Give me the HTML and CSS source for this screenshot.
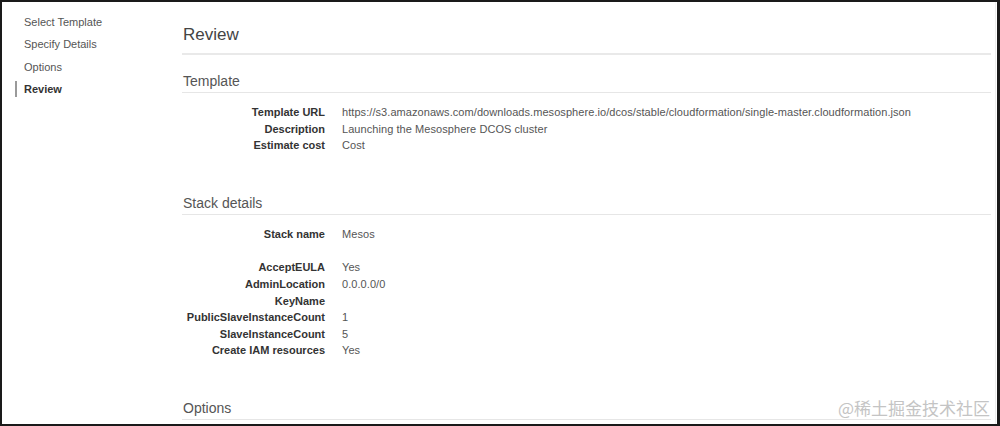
FILE: index.html
```html
<!DOCTYPE html>
<html>
<head>
<meta charset="utf-8">
<link rel="stylesheet" href="styles.css">
</head>
<body>
<div class="frame">
  <div class="page">
    <nav class="side">
      <div class="nav-item">Select Template</div>
      <div class="nav-item">Specify Details</div>
      <div class="nav-item">Options</div>
      <div class="nav-item active">Review</div>
    </nav>
    <main class="main">
      <h1 class="title">Review</h1>

      <section class="section">
        <h2 class="heading">Template</h2>
        <div class="rows">
          <div class="label">Template URL</div><div class="value">https://s3.amazonaws.com/downloads.mesosphere.io/dcos/stable/cloudformation/single-master.cloudformation.json</div>
          <div class="label">Description</div><div class="value">Launching the Mesosphere DCOS cluster</div>
          <div class="label">Estimate cost</div><div class="value">Cost</div>
        </div>
      </section>

      <section class="section">
        <h2 class="heading">Stack details</h2>
        <div class="rows">
          <div class="label">Stack name</div><div class="value">Mesos</div>
          <div class="spacer"></div>
          <div class="label">AcceptEULA</div><div class="value">Yes</div>
          <div class="label">AdminLocation</div><div class="value">0.0.0.0/0</div>
          <div class="label">KeyName</div><div class="value"></div>
          <div class="label">PublicSlaveInstanceCount</div><div class="value">1</div>
          <div class="label">SlaveInstanceCount</div><div class="value">5</div>
          <div class="label">Create IAM resources</div><div class="value">Yes</div>
        </div>
      </section>

      <section class="section">
        <h2 class="heading">Options</h2>
      </section>
    </main>
  </div>
  <div class="watermark">@稀土掘金技术社区</div>
</div>
</body>
</html>
```

FILE: styles.css
```css
html, body {
  margin: 0;
  padding: 0;
  background: #ffffff;
}

body {
  font-family: "Liberation Sans", Arial, sans-serif;
  font-size: 11px;
  color: #444;
}

.frame {
  position: relative;
  width: 1000px;
  height: 426px;
  box-sizing: border-box;
  border: 2px solid #1a1a1a;
  border-right-width: 3px;
  overflow: hidden;
}

.page {
  display: flex;
  height: 100%;
  margin-right: 1px;
  border-right: 1px solid #ededed;
}

.side {
  width: 180px;
  flex: none;
  padding-top: 9px;
}

.nav-item {
  position: relative;
  line-height: 22.4px;
  padding-left: 22px;
  color: #555;
}

.nav-item.active {
  font-weight: bold;
  color: #333;
}

.nav-item.active::before {
  content: "";
  position: absolute;
  left: 13px;
  top: 3px;
  width: 2px;
  height: 16px;
  background: #9a9a9a;
}

.main {
  flex: 1;
  padding-right: 4px;
  padding-top: 21px;
}

.title {
  margin: 0;
  font-weight: normal;
  font-size: 17px;
  line-height: 24px;
  color: #444;
  padding-left: 1px;
  padding-bottom: 6px;
  border-bottom: 2px solid #e9e9e9;
}

.section {
  margin-top: 16px;
}

.section + .section {
  margin-top: 39px;
}

.heading {
  margin: 0;
  font-weight: normal;
  font-size: 14px;
  line-height: 20px;
  color: #555;
  padding-left: 1px;
  padding-bottom: 1px;
  border-bottom: 1px solid #e6e6e6;
}

.rows {
  display: grid;
  grid-template-columns: 143px 1fr;
  column-gap: 17px;
  margin-top: 11px;
  line-height: 16.6px;
}

.label {
  text-align: right;
  font-weight: bold;
  color: #333;
}

.value {
  color: #555;
  white-space: nowrap;
  letter-spacing: 0.065px;
}

.spacer {
  grid-column: 1 / -1;
  height: 17px;
}

.watermark {
  position: absolute;
  right: 7px;
  bottom: 4px;
  font-family: "Noto Sans CJK SC", sans-serif;
  font-size: 17px;
  line-height: 24px;
  color: #c4c4c4;
}
```
